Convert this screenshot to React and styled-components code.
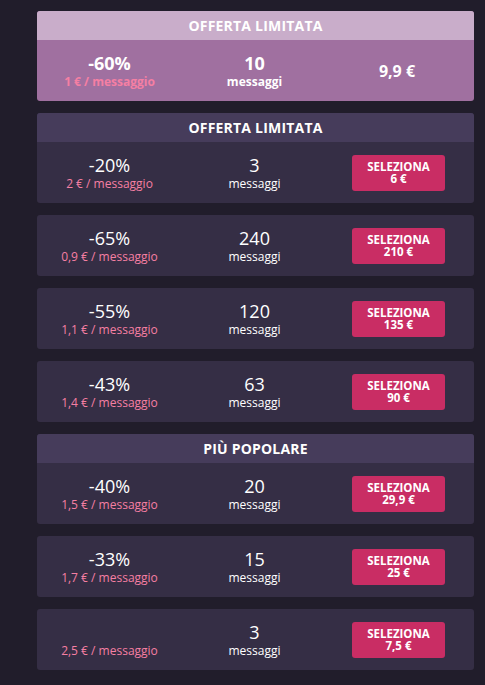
import React from "react";
import styled, { createGlobalStyle } from "styled-components";

const GlobalStyle = createGlobalStyle`
  body {
    margin: 0;
    background: #211d2b;
    font-family: "Open Sans", "Liberation Sans", sans-serif;
  }
`;

const offers = [
  { label: "OFFERTA LIMITATA", featured: true, discount: "-60%", unit: "1 € / messaggio", count: 10, price: "9,9 €" },
  { label: "OFFERTA LIMITATA", discount: "-20%", unit: "2 € / messaggio", count: 3, price: "6 €" },
  { discount: "-65%", unit: "0,9 € / messaggio", count: 240, price: "210 €" },
  { discount: "-55%", unit: "1,1 € / messaggio", count: 120, price: "135 €" },
  { discount: "-43%", unit: "1,4 € / messaggio", count: 63, price: "90 €" },
  { label: "PIÙ POPOLARE", discount: "-40%", unit: "1,5 € / messaggio", count: 20, price: "29,9 €" },
  { discount: "-33%", unit: "1,7 € / messaggio", count: 15, price: "25 €" },
  { discount: "", unit: "2,5 € / messaggio", count: 3, price: "7,5 €" },
];

export default function App() {
  return (
    <Page>
      <GlobalStyle />
      <List>
        {offers.map((o, i) => (
          <Card key={i} featured={o.featured}>
            {o.label && <Header featured={o.featured}>{o.label}</Header>}
            <Body>
              <Col>
                <Big featured={o.featured}>{o.discount || "\u00a0"}</Big>
                <Unit featured={o.featured}>{o.unit}</Unit>
              </Col>
              <Col>
                <Big featured={o.featured}>{o.count}</Big>
                <Small featured={o.featured}>messaggi</Small>
              </Col>
              <Col>
                {o.featured ? (
                  <Price>{o.price}</Price>
                ) : (
                  <Button>
                    <ButtonLine>SELEZIONA</ButtonLine>
                    <ButtonLine>{o.price}</ButtonLine>
                  </Button>
                )}
              </Col>
            </Body>
          </Card>
        ))}
      </List>
    </Page>
  );
}

const Page = styled.div`
  width: 485px;
  min-height: 685px;
  padding: 11px 0 0 37px;
  box-sizing: border-box;
`;

const List = styled.div`
  width: 437px;
  display: flex;
  flex-direction: column;
  gap: 12px;
`;

const Card = styled.div`
  background: ${(p) => (p.featured ? "#a070a0" : "#352e45")};
  border-radius: 3px;
  overflow: hidden;
`;

const Header = styled.div`
  height: 29px;
  display: flex;
  align-items: center;
  justify-content: center;
  background: ${(p) => (p.featured ? "#c9adca" : "#463c5b")};
  color: #fff;
  font-size: 14px;
  font-weight: 700;
  letter-spacing: 0.2px;
`;

const Body = styled.div`
  height: 61px;
  display: grid;
  grid-template-columns: 145px 145px 1fr;
  align-items: center;
  padding-right: 4px;
`;

const Col = styled.div`
  display: flex;
  flex-direction: column;
  align-items: center;
  justify-content: center;
  color: #fff;
`;

const Big = styled.div`
  font-size: 18px;
  line-height: 21px;
  font-weight: ${(p) => (p.featured ? 700 : 400)};
`;

const Unit = styled.div`
  font-size: 12px;
  line-height: 15px;
  color: #f57fa3;
  font-weight: ${(p) => (p.featured ? 700 : 400)};
`;

const Small = styled.div`
  font-size: 12px;
  line-height: 15px;
  font-weight: ${(p) => (p.featured ? 700 : 400)};
`;

const Price = styled.div`
  font-size: 16px;
  font-weight: 700;
  margin-left: -3px;
`;

const Button = styled.button`
  width: 93px;
  height: 36px;
  border: none;
  border-radius: 3px;
  background: #c92d64;
  color: #fff;
  font-family: inherit;
  font-size: 11.5px;
  font-weight: 700;
  padding: 0;
  display: flex;
  flex-direction: column;
  align-items: center;
  justify-content: center;
  cursor: pointer;
`;

const ButtonLine = styled.span`
  display: block;
  line-height: 12px;
`;
